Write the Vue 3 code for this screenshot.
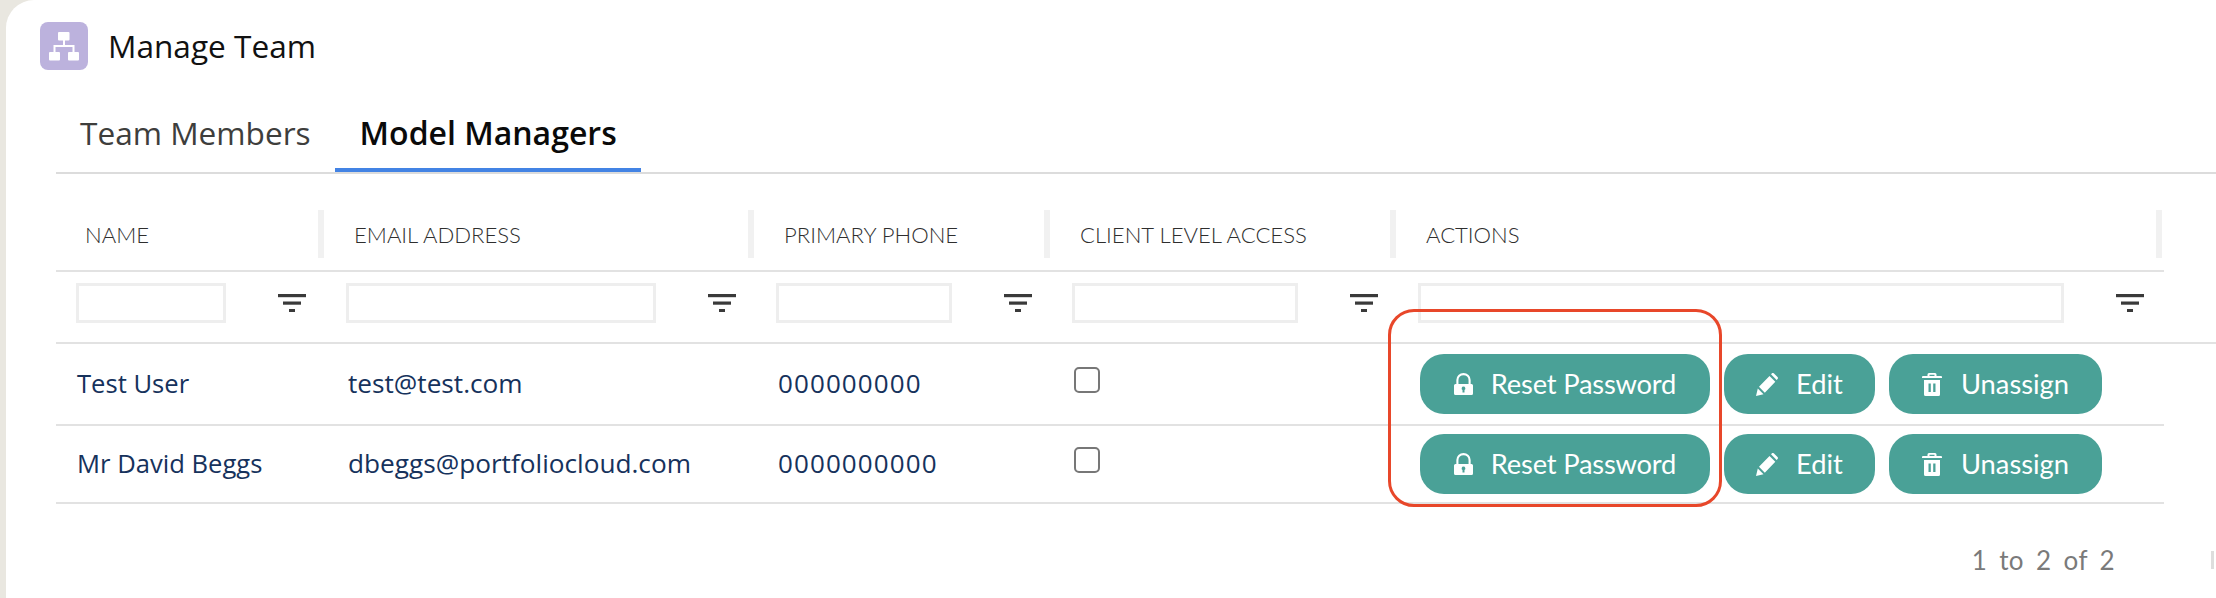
<script setup>
const columns = [
  { label: 'NAME', inputWidth: 150 },
  { label: 'EMAIL ADDRESS', inputWidth: 310 },
  { label: 'PRIMARY PHONE', inputWidth: 176 },
  { label: 'CLIENT LEVEL ACCESS', inputWidth: 226 },
  { label: 'ACTIONS', inputWidth: 646 }
]
const rows = [
  { name: 'Test User', email: 'test@test.com', phone: '000000000', height: 80 },
  { name: 'Mr David Beggs', email: 'dbeggs@portfoliocloud.com', phone: '0000000000', height: 76 }
]
</script>

<template>
  <div class="page">
    <main class="card">
      <header class="title-row">
        <span class="app-icon">
          <svg viewBox="0 0 48 48" width="48" height="48">
            <rect width="48" height="48" rx="8" fill="#bcb2dd" />
            <g fill="#fff">
              <rect x="18" y="10" width="11.5" height="8.5" rx="1" />
              <rect x="9" y="30" width="11" height="8.5" rx="1" />
              <rect x="28" y="30" width="11" height="8.5" rx="1" />
            </g>
            <path d="M24 18v6M14.5 30v-6h19v6" fill="none" stroke="#fff" stroke-width="2" />
          </svg>
        </span>
        <h1 class="title">Manage Team</h1>
      </header>

      <nav class="tabs">
        <span class="tab">Team Members</span>
        <span class="tab active">Model Managers</span>
      </nav>

      <section class="table">
        <div class="grid head">
          <div v-for="c in columns" :key="c.label" class="head-cell">
            <span class="head-label">{{ c.label }}</span>
            <span class="sep"></span>
          </div>
        </div>

        <div class="grid filters">
          <div v-for="c in columns" :key="c.label" class="filter-cell">
            <input class="filter-input" type="text" :style="{ width: c.inputWidth + 'px' }" />
            <svg class="filter-icon" viewBox="0 0 28 18" width="28" height="18">
              <rect x="0" y="0" width="28" height="3.2" fill="#3a3a3a" />
              <rect x="5" y="7.5" width="18" height="3.2" fill="#3a3a3a" />
              <rect x="11" y="15" width="6" height="3" fill="#3a3a3a" />
            </svg>
          </div>
        </div>

        <div v-for="r in rows" :key="r.email" class="grid row" :style="{ height: r.height + 'px' }">
          <div class="cell name">{{ r.name }}</div>
          <div class="cell email">{{ r.email }}</div>
          <div class="cell phone">{{ r.phone }}</div>
          <div class="cell"><span class="checkbox"></span></div>
          <div class="cell actions">
            <button class="btn reset">
              <svg viewBox="0 0 19 22" width="19" height="22">
                <path d="M3.4 11.500V7a6.100 5.900 0 0 1 12.200 0V11.500" fill="none" stroke="#fff" stroke-width="2.100" />
                <path fill="#fff" fill-rule="evenodd" d="M1.500 11h16a1.500 1.500 0 0 1 1.500 1.500v8a1.500 1.500 0 0 1-1.500 1.500h-16A1.500 1.500 0 0 1 0 20.500v-8A1.500 1.500 0 0 1 1.500 11zM9.500 13.500a1.900 1.900 0 0 0-1 3.500V19.500h2V17a1.900 1.900 0 0 0-1-3.500z" />
              </svg>
              <span class="btn-label">Reset Password</span>
            </button>
            <button class="btn edit">
              <svg viewBox="0 0 22 23" width="22" height="23">
                <path fill="#fff" d="M0 23l1.800-7.500 5.700 5.700zM3 13.800 13.500 2.900l5.800 5.900L8.800 19.700zM15 1.300l1-1c.6-.5 1.500-.4 2 .1l3.500 3.600c.6.600.6 1.400.1 2l-1 1z" />
              </svg>
              <span class="btn-label">Edit</span>
            </button>
            <button class="btn unassign">
              <svg viewBox="0 0 20 23" width="20" height="23">
                <path fill="#fff" fill-rule="evenodd" d="M7 0h6a1.500 1.500 0 0 1 1.500 1.500V3H19a1 1 0 0 1 1 1v1H0V4a1 1 0 0 1 1-1h4.500V1.500A1.500 1.500 0 0 1 7 0zm.500 1.800V3h5V1.800zM2 7h16v14.500a1.500 1.500 0 0 1-1.500 1.500h-13A1.500 1.500 0 0 1 2 21.500zm4.500 3.500V19h2.300v-8.500zm4.700 0V19h2.300v-8.500z" />
              </svg>
              <span class="btn-label">Unassign</span>
            </button>
          </div>
        </div>
      </section>

      <footer class="pager">
        <span class="pager-text">1 to 2 of 2</span>
        <span class="pager-bar"></span>
      </footer>

      <div class="highlight"></div>
    </main>
  </div>
</template>

<style scoped>
.page {
  width: 2216px;
  height: 598px;
  overflow: hidden;
  background: #e9e7e0;
  padding-left: 6px;
  box-sizing: border-box;
}
.card {
  position: relative;
  width: 2210px;
  height: 598px;
  background: #fff;
  border-top-left-radius: 28px;
  font-family: "Open Sans", sans-serif;
  box-sizing: border-box;
  padding-top: 22px;
}
.title-row {
  display: flex;
  align-items: center;
  gap: 20px;
  height: 48px;
  margin-left: 34px;
}
.app-icon { display: block; width: 48px; height: 48px; }
.app-icon svg { display: block; }
.title {
  margin: 0;
  font-size: 31.600px;
  font-weight: 400;
  color: #111;
  line-height: 48px;
}
.tabs {
  display: flex;
  margin-left: 50px;
  height: 104px;
  border-bottom: 2px solid #dcdcdc;
  box-sizing: border-box;
  width: 2160px;
}
.tab {
  padding: 0 24px;
  height: 102px;
  box-sizing: border-box;
  line-height: 126px;
  font-size: 31.600px;
  color: #3e3e3c;
}
.tab.active {
  padding-left: 25px;
  color: #0a0a0a;
  font-weight: 600;
  font-size: 32px;
  border-bottom: 4px solid #4383e4;
}
.table { margin-left: 50px; width: 2160px; }
.grid {
  display: grid;
  grid-template-columns: 268px 430px 296px 346px 768px;
  width: 2108px;
  box-sizing: border-box;
}
.head {
  height: 98px;
  border-bottom: 2px solid #e2e2e2;
}
.head-cell {
  position: relative;
  display: flex;
  align-items: center;
  padding-left: 30px;
  padding-top: 24px;
  box-sizing: border-box;
  justify-content: space-between;
}
.head-cell:first-child { padding-left: 29px; }
.head-label {
  font-family: Lato, sans-serif;
  font-size: 22.100px;
  font-weight: 300;
  color: #2e2e2e;
  white-space: nowrap;
}
.sep {
  position: absolute;
  top: 36px;
  right: 0;
  width: 6px;
  height: 48px;
  background: #f1f1f1;
}
.head-cell:last-child .sep { right: 2px; }
.filters {
  height: 72px;
  width: 2160px;
  border-bottom: 2px solid #e2e2e2;
  grid-template-columns: 268px 430px 296px 346px 820px;
}
.filter-cell {
  display: flex;
  align-items: flex-start;
  padding-left: 22px;
  box-sizing: border-box;
  position: relative;
  padding-top: 11px;
}
.filter-cell:first-child { padding-left: 20px; }
.filter-input {
  height: 40px;
  box-sizing: border-box;
  border: 3px solid #eeeeee;
  background: #fff;
  padding: 0;
  margin: 0;
  outline: none;
}
.filter-icon {
  margin-top: 11px;
  margin-left: auto;
  margin-right: 18px;
}
.filter-cell:last-child .filter-icon { margin-left: 52px; }
.row {
  align-items: center;
  border-bottom: 2px solid #e2e2e2;
  box-sizing: content-box;
  width: 2108px;
}
.cell {
  padding-left: 24px;
  font-size: 26px;
  color: #16325c;
  white-space: nowrap;
  box-sizing: border-box;
  margin-bottom: 2px;
}
.cell.name { padding-left: 21px; font-size: 25.600px; }
.cell.email { font-size: 26.200px; }
.cell.phone { letter-spacing: 1.100px; }
.checkbox {
  display: block;
  width: 26px;
  height: 26px;
  box-sizing: border-box;
  border: 2px solid #777;
  border-radius: 5px;
  margin-bottom: 6px;
}
.actions {
  display: flex;
  gap: 14px;
  margin-bottom: 0;
}
.btn {
  display: flex;
  align-items: center;
  height: 60px;
  border: none;
  border-radius: 24px;
  background: #4aa197;
  color: #fff;
  font-family: Lato, sans-serif;
  font-size: 27.300px;
  padding: 0;
  box-sizing: border-box;
  justify-content: center;
}
.btn svg { display: block; flex: none; }
.btn-label { padding-bottom: 2px; }
.reset { width: 290px; gap: 18px; }
.reset .btn-label { letter-spacing: -0.2px; }
.edit { width: 151px; gap: 18px; }
.unassign { width: 213px; gap: 19px; }
.pager {
  display: flex;
  align-items: center;
  justify-content: flex-end;
  margin-top: 36px;
  height: 40px;
}
.pager-text {
  font-family: Lato, sans-serif;
  font-size: 26px;
  font-weight: 400;
  color: #7a7a7a;
  word-spacing: 5px;
  letter-spacing: 0.4px;
}
.pager-bar {
  display: block;
  width: 3px;
  height: 18px;
  background: #dddddd;
  margin-left: 96px;
  margin-right: 2px;
}
.highlight {
  position: absolute;
  left: 1382px;
  top: 309px;
  width: 334px;
  height: 198px;
  box-sizing: border-box;
  border: 3px solid #e8472a;
  border-radius: 26px;
  pointer-events: none;
}
</style>
